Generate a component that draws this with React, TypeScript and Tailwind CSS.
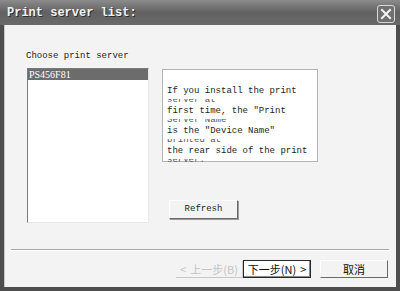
import React from "react";

const mono = { fontFamily: '"Liberation Mono", "DejaVu Sans Mono", monospace' };
const cjk = { fontFamily: '"Noto Sans CJK SC", "Liberation Sans", sans-serif' };

function Line({ main, ghost }: { main: string; ghost: string }) {
  return (
    <div>
      <div className="h-[12px] leading-[12px] whitespace-nowrap">{main}</div>
      <div className="mt-[2px] h-[3px] leading-[3px] overflow-hidden whitespace-nowrap text-[#555]">{ghost}</div>
    </div>
  );
}

export default function App() {
  return (
    <div className="w-[400px] h-[291px] flex flex-col bg-[#4e4e4e] overflow-hidden">
      {/* title bar */}
      <div className="h-[25px] flex items-center justify-between pl-[7px] pr-[5px] bg-gradient-to-b from-[#8c8c8c] via-[#616161] to-[#6a6a6a]">
        <span
          className="text-[12px] font-bold text-[#f2f2f2] leading-none [text-shadow:1px_1px_0_#2e2e2e]"
          style={mono}
        >
          Print server list:
        </span>
        <div className="w-[18px] h-[18px] mt-[3px] rounded-[3px] border border-[#d8d8d8] bg-[#707070] flex items-center justify-center">
          <svg width="12" height="12" viewBox="0 0 12 12">
            <path d="M2 2 L10 10 M10 2 L2 10" stroke="#f4f4f4" strokeWidth="2" strokeLinecap="square" />
          </svg>
        </div>
      </div>
      {/* body */}
      <div className="flex-1 ml-[4px] mr-[4px] mb-[4px] bg-[#f3f3f3] border-l border-[#c8c8c8] flex flex-col text-[9px] text-[#1e1e1e]" style={mono}>
        <div className="mt-[25px] ml-[21px] h-[12px] leading-[12px]">Choose print server</div>
        <div className="flex mt-[6px] ml-[22px]">
          {/* listbox */}
          <div className="w-[122px] h-[155px] bg-white border-t border-l border-[#7a7a7a] border-r border-b border-r-[#e8e8e8] border-b-[#e8e8e8]">
            <div className="h-[11px] bg-[#6c6c6c] text-white text-[10px] leading-[11px] pl-[1px]" style={{ fontFamily: '"Liberation Serif", serif' }}>
              PS456F81
            </div>
          </div>
          <div className="ml-[13px] flex flex-col">
            <div className="mt-[1px] w-[156px] h-[93px] bg-white border border-[#b4b4b4] pl-[4px] pt-[15px]">
              <Line main="If you install the print" ghost="server at" />
              <div className="mt-[3px]">
                <Line main={'first time, the "Print'} ghost={'Server Name"'} />
              </div>
              <div className="mt-[3px]">
                <Line main={'is the "Device Name"'} ghost="printed at" />
              </div>
              <div className="mt-[3px]">
                <Line main="the rear side of the print" ghost="server." />
              </div>
            </div>
            <button className="mt-[38px] ml-[7px] w-[69px] h-[19px] bg-[#f3f3f3] border border-t-white border-l-white border-r-[#6a6a6a] border-b-[#6a6a6a] text-[9px] leading-none flex items-center justify-center shadow-[1px_1px_0_#9a9a9a]">
              Refresh
            </button>
          </div>
        </div>
        {/* separator */}
        <div className="mt-[26px] ml-[6px] w-[378px] h-[2px] border-t border-[#a6a6a6] border-b border-b-white" />
        {/* buttons */}
        <div className="flex mt-[9px] ml-[171px] items-start" style={cjk}>
          <div className="mt-[1px] w-[67px] h-[17px] flex items-center justify-center gap-[4px] text-[11px] text-[#c4c4c4] border-b border-r border-[#c8c8c8]">
            <span>&lt;</span>
            <span>上一步(B)</span>
          </div>
          <div className="w-[68px] h-[18px] flex items-center justify-center gap-[4px] text-[11px] text-[#111] bg-white border border-[#2a2a2a] shadow-[inset_-1px_-1px_0_#8a8a8a]">
            <span>下一步(N)</span>
            <span>&gt;</span>
          </div>
          <div className="ml-[9px] w-[68px] h-[18px] flex items-center justify-center text-[11px] text-[#111] bg-[#f3f3f3] border border-t-white border-l-white border-r-[#6a6a6a] border-b-[#6a6a6a]">
            取消
          </div>
        </div>
      </div>
    </div>
  );
}
